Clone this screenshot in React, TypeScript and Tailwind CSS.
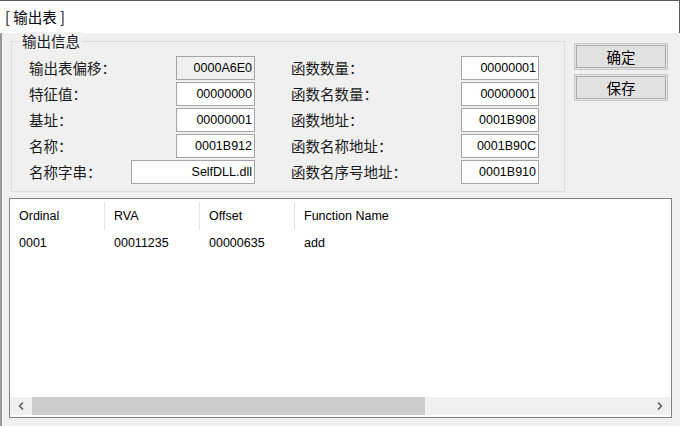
import { ChevronLeft, ChevronRight } from "lucide-react";

const cjk = "font-['Microsoft_YaHei','Noto_Sans_CJK_SC',sans-serif]";
const latin = "font-['Liberation_Sans','Noto_Sans',sans-serif]";

type Field = { label: string; value: string; labelW: string; boxW: string; readOnly?: boolean };

const leftFields: Field[] = [
  { label: "输出表偏移：", value: "0000A6E0", labelW: "w-[147px]", boxW: "w-[79px]", readOnly: true },
  { label: "特征值：", value: "00000000", labelW: "w-[147px]", boxW: "w-[79px]" },
  { label: "基址：", value: "00000001", labelW: "w-[147px]", boxW: "w-[79px]" },
  { label: "名称：", value: "0001B912", labelW: "w-[147px]", boxW: "w-[79px]" },
  { label: "名称字串：", value: "SelfDLL.dll", labelW: "w-[102px]", boxW: "w-[124px]" },
];

const rightFields: Field[] = [
  { label: "函数数量：", value: "00000001", labelW: "w-[170px]", boxW: "w-[78px]" },
  { label: "函数名数量：", value: "00000001", labelW: "w-[170px]", boxW: "w-[78px]" },
  { label: "函数地址：", value: "0001B908", labelW: "w-[170px]", boxW: "w-[78px]" },
  { label: "函数名称地址：", value: "0001B90C", labelW: "w-[170px]", boxW: "w-[78px]" },
  { label: "函数名序号地址：", value: "0001B910", labelW: "w-[170px]", boxW: "w-[78px]" },
];

function FieldRow({ f }: { f: Field }) {
  return (
    <div className="flex items-center h-[24px]">
      <span className={`${f.labelW} ${cjk} text-[14.5px] text-[#1a1a1a] leading-none`}>{f.label}</span>
      <div
        className={`${f.boxW} h-[24px] border border-[#a5a5a5] flex items-center justify-end pr-[2px] ${latin} text-[12.5px] text-black ${
          f.readOnly ? "bg-[#f0f0f0]" : "bg-white"
        }`}
      >
        {f.value}
      </div>
    </div>
  );
}

const columns = ["Ordinal", "RVA", "Offset", "Function Name"];
const row = ["0001", "00011235", "00000635", "add"];

export default function App() {
  return (
    <div className="w-[680px] h-[426px] bg-[#f0f0f0] overflow-hidden flex flex-col">
      <div className="h-[33px] bg-white border-t border-r border-[#5a5a5a] flex items-center pl-[5px] shrink-0">
        <span className={`${cjk} text-[14.5px] text-black`}>[ 输出表 ]</span>
      </div>

      <div className="flex-1 border-l-2 border-[#9a9a9a] pl-[7px] pt-[8px]">
        <div className="flex">
          {/* 输出信息 group */}
          <div className="relative ml-[2px] w-[554px] h-[151px] border border-[#dcdcdc] pt-[14px] pl-[17px] flex">
            <span className={`absolute -top-[10px] left-[8px] px-[2px] bg-[#f0f0f0] ${cjk} text-[14.5px] text-[#1a1a1a] leading-[18px]`}>
              输出信息
            </span>
            <div className="flex flex-col gap-[2px] w-[226px]">
              {leftFields.map((f) => (
                <FieldRow key={f.label} f={f} />
              ))}
            </div>
            <div className="flex flex-col gap-[2px] ml-[36px]">
              {rightFields.map((f) => (
                <FieldRow key={f.label} f={f} />
              ))}
            </div>
          </div>

          <div className="ml-[9px] mt-[2px] flex flex-col gap-[4px]">
            {["确定", "保存"].map((b) => (
              <button
                key={b}
                className={`w-[94px] h-[27px] border border-[#c8c8c8] bg-[#e1e1e1] p-[1px] ${cjk} text-[14.5px] text-black`}
              >
                <div className="w-full h-full border border-[#adadad] flex items-center justify-center">{b}</div>
              </button>
            ))}
          </div>
        </div>

        {/* list view */}
        <div className="mt-[6px] w-[663px] h-[220px] border border-[#828282] bg-white flex flex-col">
          <div className={`flex h-[32px] pt-[2px] items-center ${latin} text-[12.5px] text-black`}>
            {columns.map((c, i) => (
              <div
                key={c}
                className={`w-[95px] h-[28px] pl-[9px] flex items-center whitespace-nowrap ${
                  i < 3 ? "border-r border-[#e5e5e5]" : ""
                }`}
              >
                {c}
              </div>
            ))}
          </div>
          <div className={`flex h-[24px] items-center ${latin} text-[12.5px] text-black`}>
            {row.map((v, i) => (
              <div key={i} className="w-[95px] pl-[9px]">
                {v}
              </div>
            ))}
          </div>
          <div className="flex-1" />
          <div className="h-[18px] bg-[#f0f0f0] flex items-center mb-[2px]">
            <div className="w-[22px] h-full flex items-center justify-center text-[#606060]">
              <ChevronLeft size={12} strokeWidth={3.5} />
            </div>
            <div className="w-[393px] h-full bg-[#cdcdcd]" />
            <div className="flex-1" />
            <div className="w-[22px] h-full flex items-center justify-center text-[#606060]">
              <ChevronRight size={12} strokeWidth={3.5} />
            </div>
          </div>
        </div>
      </div>
    </div>
  );
}
